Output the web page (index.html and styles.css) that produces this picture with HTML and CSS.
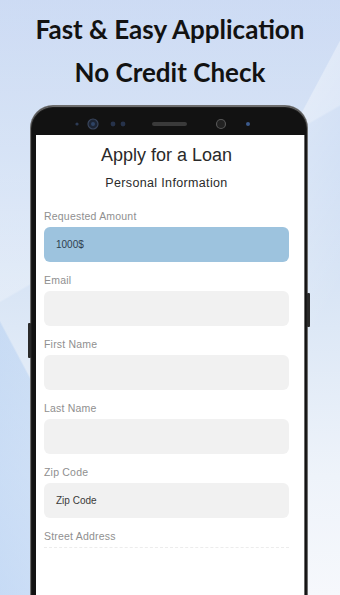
FILE: index.html
```html
<!DOCTYPE html>
<html>
<head>
<meta charset="utf-8">
<link rel="stylesheet" href="styles.css">
</head>
<body>
<div class="page">
  <div class="hero">
    <div class="hero-line">Fast &amp; Easy Application</div>
    <div class="hero-line">No Credit Check</div>
  </div>
  <div class="phone">
    <span class="btn btn-left"></span>
    <span class="btn btn-right"></span>
    <div class="bezel">
      <svg width="276" height="28" viewBox="0 0 276 28">
        <circle cx="46" cy="18" r="1.6" fill="#2d3b55"/>
        <circle cx="62" cy="18" r="5" fill="#1c2433" stroke="#39455c" stroke-width="1.2"/>
        <circle cx="62" cy="18" r="2" fill="#2f4466"/>
        <circle cx="82" cy="18" r="2.4" fill="#26324a"/>
        <circle cx="92" cy="18" r="2.4" fill="#26324a"/>
        <rect x="121" y="16" width="35" height="4" rx="2" fill="#3a3a3a"/>
        <circle cx="190" cy="18" r="4.5" fill="#222" stroke="#555" stroke-width="1.2"/>
        <circle cx="217" cy="18" r="2" fill="#3b5a8c"/>
      </svg>
    </div>
    <div class="screen">
      <div class="screen-title">Apply for a Loan</div>
      <div class="screen-sub">Personal Information</div>
      <div class="form">
        <div class="field">
          <div class="label">Requested Amount</div>
          <div class="input input-active">1000$</div>
        </div>
        <div class="field">
          <div class="label">Email</div>
          <div class="input"></div>
        </div>
        <div class="field">
          <div class="label">First Name</div>
          <div class="input"></div>
        </div>
        <div class="field">
          <div class="label">Last Name</div>
          <div class="input"></div>
        </div>
        <div class="field">
          <div class="label">Zip Code</div>
          <div class="input">Zip Code</div>
        </div>
        <div class="field">
          <div class="label">Street Address</div>
          <div class="input input-faint"></div>
        </div>
      </div>
    </div>
  </div>
</div>
</body>
</html>
```

FILE: styles.css
```css
* { box-sizing: border-box; }
html, body { margin: 0; padding: 0; }
body {
  width: 340px;
  height: 595px;
  overflow: hidden;
}
.page {
  width: 340px;
  height: 595px;
  overflow: hidden;
  background:
    linear-gradient(118deg, rgba(255,255,255,0) 0%, rgba(255,255,255,0) 55%, rgba(255,255,255,0.35) 55.2%, rgba(255,255,255,0) 75%),
    linear-gradient(62deg, rgba(160,195,240,0.55) 0%, rgba(160,195,240,0.35) 22%, rgba(255,255,255,0) 22.3%),
    linear-gradient(150deg, rgba(255,255,255,0.25) 0%, rgba(255,255,255,0.25) 38%, rgba(255,255,255,0) 38.3%),
    linear-gradient(180deg, #bccff0 0%, #c9daf3 25%, #dde8f6 55%, #eef3fa 80%, #f6f8fc 100%);
}
.hero {
  padding-top: 8px;
  text-align: center;
  font-family: Lato, "Open Sans", "Liberation Sans", sans-serif;
  font-weight: 700;
  font-size: 26px;
  line-height: 43px;
  color: #121212;
}
.phone {
  position: relative;
  margin: 12px 0 0 31px;
  width: 276px;
  height: 500px;
  background: #121212;
  border-radius: 22px 22px 0 0;
  box-shadow: 0 0 0 1px #6e6e6e, inset 0 1px 1px #777;
  padding: 0 3px 0 5px;
}
.btn {
  position: absolute;
  width: 3px;
  background: #2a2a2a;
  border-radius: 1px;
}
.btn-left { left: -3px; top: 217px; height: 35px; }
.btn-right { right: -3px; top: 187px; height: 34px; }
.bezel {
  height: 29px;
  margin: 0 -3px 0 -5px;
}
.bezel svg { display: block; margin-top: 1px; }
.screen {
  background: #ffffff;
  height: 470px;
  padding: 10px 15px 0 8px;
  font-family: "Liberation Sans", Arial, sans-serif;
  box-shadow: 1px 0 0 #6a6a6a;
}
.screen-title {
  text-align: center;
  font-size: 18px;
  line-height: 21px;
  color: #2a2a2a;
}
.screen-sub {
  text-align: center;
  font-size: 12.5px;
  line-height: 14px;
  margin-top: 10px;
  color: #2a2a2a;
  letter-spacing: 0.35px;
}
.form {
  margin-top: 8px;
  display: flex;
  flex-direction: column;
}
.field { padding-top: 12px; }
.label {
  font-size: 10.5px;
  line-height: 12px;
  color: #8f8f8f;
  margin-bottom: 5px;
  letter-spacing: 0.2px;
}
.input {
  height: 35px;
  border-radius: 6px;
  background: #f1f1f1;
  font-size: 10px;
  line-height: 35px;
  padding-left: 12px;
  color: #3a3a3a;
}
.input-active {
  background: #9dc3de;
  color: #2e3e4e;
}
.input-faint {
  background: transparent;
  height: 3px;
  border-radius: 0;
  border-top: 1px dashed #ececec;
  margin-top: 4px;
}
```
